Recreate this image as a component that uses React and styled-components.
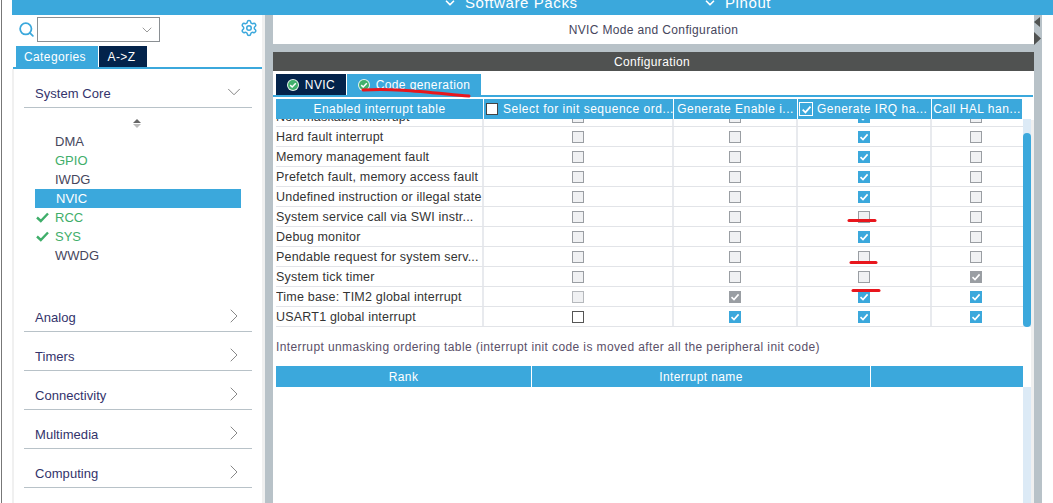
import React from "react";
import styled, { createGlobalStyle } from "styled-components";
import { Search, Settings, ChevronDown, ChevronRight } from "lucide-react";

const GlobalStyle = createGlobalStyle`
  html, body {
    margin: 0;
    padding: 0;
    background: #fff;
    overflow: hidden;
  }
  * { box-sizing: border-box; }
`;

const blue = "#3ba8dc";
const navy = "#03234b";
const slate = "#b8c2c8";
const soft = "#f0f0f0";
const ink = "#46465c";

const Page = styled.div`
  width: 1053px;
  height: 503px;
  position: relative;
  overflow: hidden;
  background: #fff;
  display: flex;
  flex-direction: column;
  padding-left: 12px;
  font-family: "Liberation Sans", Arial, sans-serif;
  color: ${ink};
`;

const EdgeLine = styled.div`
  position: absolute;
  left: 1px;
  top: 0;
  bottom: 0;
  width: 1px;
  background: #777;
`;

const TopBar = styled.div`
  height: 15px;
  flex: none;
  background: ${blue};
  color: #fff;
  overflow: hidden;
  display: flex;
  padding-left: 431px;
`;

const TopItem = styled.div`
  width: ${(p) => p.$width}px;
  display: flex;
  gap: 8px;
  align-items: center;
  height: 15px;
  margin-top: -5px;
  font-size: 15px;
  letter-spacing: 0.6px;
  white-space: nowrap;
`;

const Body = styled.div`
  flex: 1;
  display: flex;
  min-height: 0;
`;

const Sidebar = styled.div`
  width: 253px;
  flex: none;
  display: flex;
  flex-direction: column;
  border-right: 3px solid ${soft};
`;

const SearchRow = styled.div`
  height: 31px;
  flex: none;
  display: flex;
  align-items: flex-start;
  padding: 2px 4px 0 6px;
`;

const SearchGlyph = styled(Search)`
  margin: 4px 2px 0 0;
  color: ${blue};
`;

const Select = styled.div`
  width: 123px;
  height: 25px;
  border: 1px solid #8a8f93;
  display: flex;
  align-items: center;
  justify-content: flex-end;
  padding-right: 4px;
  color: #8a8a8a;
`;

const Gear = styled(Settings)`
  margin: 2px 0 0 auto;
  color: ${blue};
`;

const SideTabs = styled.div`
  height: 23px;
  flex: none;
  display: flex;
  gap: 1px;
  padding-left: 3px;
  border-bottom: 2px solid ${blue};
  margin-left: 1px;
`;

const Tab = styled.div`
  height: 21px;
  width: ${(p) => p.$width}px;
  padding-right: ${(p) => p.$trim || 0}px;
  background: ${(p) => (p.$active ? blue : navy)};
  color: #fff;
  font-size: 12px;
  letter-spacing: 0.4px;
  display: flex;
  align-items: center;
  justify-content: center;
  gap: 6px;
`;

const Panel = styled.div`
  flex: 1;
  display: flex;
  flex-direction: column;
  border-left: 2px solid ${soft};
  padding: 0 10px;
  min-height: 0;
`;

const Category = styled.div`
  height: 39px;
  flex: none;
  border-bottom: 1px solid ${slate};
  display: flex;
  align-items: flex-end;
  justify-content: space-between;
  padding: 0 6px 5px 11px;
  font-size: 13px;
  letter-spacing: 0.05px;
  color: #33336b;
  line-height: 16px;
`;

const Caret = styled.span`
  color: #7a7a7a;
  display: flex;
  width: 24px;
  height: 24px;
  align-items: center;
  justify-content: center;
  margin-bottom: -2px;
`;

const ListArea = styled.div`
  height: 185px;
  flex: none;
  display: flex;
  flex-direction: column;
  padding: 11px 0 0 11px;
`;

const SortArrows = styled.svg`
  display: block;
  align-self: center;
  margin: 0 0 4px -14px;
`;

const ListRow = styled.div`
  height: 19px;
  width: 206px;
  display: flex;
  align-items: center;
  padding-left: ${(p) => (p.$active ? 21 : 20)}px;
  position: relative;
  font-size: 13px;
  background: ${(p) => (p.$active ? blue : "transparent")};
  color: ${(p) => (p.$active ? "#fff" : p.$ok ? "#3fae6a" : ink)};
`;

const Tick = styled.svg`
  position: absolute;
  left: 1px;
  top: 4px;
`;

const Splitter = styled.div`
  width: 8px;
  flex: none;
  background: ${slate};
`;

const Main = styled.div`
  width: 761px;
  flex: none;
  display: flex;
  flex-direction: column;
`;

const TitleBar = styled.div`
  height: 29px;
  flex: none;
  display: flex;
  align-items: center;
  justify-content: center;
  font-size: 12px;
  letter-spacing: 0.35px;
`;

const GreyGap = styled.div`
  height: 8px;
  flex: none;
  background: ${slate};
`;

const ConfigBar = styled.div`
  height: 19px;
  flex: none;
  background: #505251;
  color: #fff;
  font-size: 12px;
  letter-spacing: 0.35px;
  display: flex;
  align-items: center;
  justify-content: center;
  padding-right: 3px;
`;

const ConfigTabs = styled.div`
  height: 24px;
  flex: none;
  display: flex;
  gap: 1px;
  align-items: flex-end;
  padding-left: 3px;
`;

const BlueRule = styled.div`
  height: 2px;
  width: 760px;
  flex: none;
  background: ${blue};
`;

const Content = styled.div`
  flex: 1;
  display: flex;
  min-height: 0;
`;

const TableArea = styled.div`
  width: 750px;
  flex: none;
  padding-left: 3px;
  display: flex;
  flex-direction: column;
`;

const columns = "208px 190px 124px 134px 91px";

const HeadRow = styled.div`
  height: 20px;
  margin-top: 2px;
  flex: none;
  display: grid;
  grid-template-columns: ${columns};
`;

const HeadCell = styled.div`
  background: ${blue};
  color: #fff;
  font-size: 12px;
  letter-spacing: 0.5px;
  display: flex;
  align-items: center;
  justify-content: ${(p) => (p.$start ? "flex-start" : "center")};
  gap: 5px;
  white-space: nowrap;
  overflow: hidden;
  border-right: 1px solid #fff;
  padding: 0 2px;
`;

const HeadBox = styled.span`
  width: ${(p) => (p.$light ? 14 : 12)}px;
  height: ${(p) => (p.$light ? 14 : 12)}px;
  margin: 0 ${(p) => (p.$light ? -1 : 0)}px 0 ${(p) => (p.$light ? -1 : 0)}px;
  flex: none;
  border: 1px solid ${(p) => (p.$light ? "#fff" : "#444")};
  background: ${(p) => (p.$light ? blue : "#fff")};
  display: flex;
  align-items: center;
  justify-content: center;
`;

const RowsClip = styled.div`
  height: 208px;
  flex: none;
  overflow: hidden;
`;

const Rows = styled.div`
  margin-top: -12px;
`;

const Row = styled.div`
  height: 20px;
  display: grid;
  grid-template-columns: ${columns};
  border-bottom: 1px solid #e2e4e8;
`;

const Cell = styled.div`
  display: flex;
  align-items: center;
  justify-content: center;
  border-right: 2px solid #e8eaee;
  font-size: 12.5px;
  letter-spacing: 0.2px;
  color: #333;
  white-space: nowrap;
  overflow: hidden;
  &:first-child {
    justify-content: flex-start;
  }
  &:last-child {
    border-right: 0;
    padding-right: 4px;
  }
`;

const boxTone = {
  off: ["#f0f1f3", "#9a9ea3"],
  on: [blue, blue],
  locked: ["#9a9ea3", "#9a9ea3"],
  open: ["#fff", "#555"],
  faint: ["#f0f1f3", "#b5b8bc"],
};

const Box = styled.span`
  width: 12px;
  height: 12px;
  border: 1px solid ${(p) => boxTone[p.$state][1]};
  background: ${(p) => boxTone[p.$state][0]};
  display: flex;
  align-items: center;
  justify-content: center;
`;

const Note = styled.div`
  height: 39px;
  flex: none;
  display: flex;
  align-items: center;
  font-size: 12px;
  letter-spacing: 0.39px;
  color: #5a5068;
`;

const RankHead = styled.div`
  display: grid;
  grid-template-columns: 256px 339px 152px;
  height: 21px;
  flex: none;
`;

const RankCell = styled.div`
  background: ${blue};
  color: #fff;
  font-size: 12px;
  letter-spacing: 0.4px;
  display: flex;
  align-items: center;
  justify-content: center;
  border-right: ${(p) => (p.$last ? 0 : "1px solid #fff")};
`;

const ScrollCol = styled.div`
  width: 8px;
  flex: none;
  display: flex;
  flex-direction: column;
`;

const Track = styled.div`
  height: 208px;
  margin-top: 22px;
  padding-top: 14px;
  flex: none;
  background: #dceaf6;
`;

const Thumb = styled.div`
  height: 194px;
  background: ${blue};
  border-radius: 4px;
`;

const LowerTrack = styled.div`
  flex: 1;
  margin-top: 60px;
  background: #dceaf6;
`;

const SoftEdge = styled.div`
  width: 4px;
  flex: none;
  margin-top: 23px;
  background: ${soft};
`;

const Collapse = styled.div`
  width: 8px;
  flex: none;
  background: ${slate};
  padding-top: 2px;
`;

const Marks = styled.svg`
  position: absolute;
  left: 0;
  top: 0;
  pointer-events: none;
`;

const Check = ({ color = "#fff", size = 10 }) => (
  <svg width={size} height={size} viewBox="0 0 10 10">
    <path d="M1.5 5.2 4 7.6 8.6 2.4" fill="none" stroke={color} strokeWidth="1.6" />
  </svg>
);

const Ok = () => (
  <svg width="12" height="12" viewBox="0 0 12 12">
    <circle cx="6" cy="6" r="6" fill="#e6f4ea" />
    <circle cx="6" cy="6" r="5" fill="#41b06c" />
    <path d="M3.2 6.1 5.2 8 8.8 4.2" fill="none" stroke="#fff" strokeWidth="1.5" />
  </svg>
);

const tableRows = [
  ["Non maskable interrupt", "off", "off", "on", "off"],
  ["Hard fault interrupt", "off", "off", "on", "off"],
  ["Memory management fault", "off", "off", "on", "off"],
  ["Prefetch fault, memory access fault", "off", "off", "on", "off"],
  ["Undefined instruction or illegal state", "off", "off", "on", "off"],
  ["System service call via SWI instr...", "off", "off", "off", "off"],
  ["Debug monitor", "off", "off", "on", "off"],
  ["Pendable request for system serv...", "off", "off", "off", "off"],
  ["System tick timer", "off", "off", "off", "locked"],
  ["Time base: TIM2 global interrupt", "faint", "locked", "on", "on"],
  ["USART1 global interrupt", "open", "on", "on", "on"],
];

const peripherals = [
  { name: "DMA" },
  { name: "GPIO", ok: true },
  { name: "IWDG" },
  { name: "NVIC", active: true },
  { name: "RCC", ok: true, tick: true },
  { name: "SYS", ok: true, tick: true },
  { name: "WWDG" },
];

const closedGroups = ["Analog", "Timers", "Connectivity", "Multimedia", "Computing"];

export default function App() {
  return (
    <Page>
      <GlobalStyle />
      <EdgeLine />
      <TopBar>
        <TopItem $width={260}>
          <ChevronDown size={14} strokeWidth={3} />
          Software Packs
        </TopItem>
        <TopItem $width={100}>
          <ChevronDown size={14} strokeWidth={3} />
          Pinout
        </TopItem>
      </TopBar>
      <Body>
        <Sidebar>
          <SearchRow>
            <SearchGlyph size={17} strokeWidth={2.5} />
            <Select>
              <ChevronDown size={16} strokeWidth={1.3} />
            </Select>
            <Gear size={18} />
          </SearchRow>
          <SideTabs>
            <Tab $active $width={82} $trim={4}>Categories</Tab>
            <Tab $width={48} $trim={3}>A-&gt;Z</Tab>
          </SideTabs>
          <Panel>
            <Category>
              System Core
              <Caret><ChevronDown size={22} strokeWidth={1} /></Caret>
            </Category>
            <ListArea>
              <SortArrows width="10" height="9" viewBox="0 0 10 9">
                <path d="M5 0 9 4H1Z" fill="#666" />
                <path d="M5 9 9 5H1Z" fill="#bbb" />
              </SortArrows>
              {peripherals.map((item) => (
                <ListRow key={item.name} $active={item.active} $ok={item.ok}>
                  {item.tick && (
                    <Tick width="13" height="11" viewBox="0 0 13 11">
                      <path d="M1 5.5 4.8 9 12 1.5" fill="none" stroke="#3fae6a" strokeWidth="2.4" />
                    </Tick>
                  )}
                  {item.name}
                </ListRow>
              ))}
            </ListArea>
            {closedGroups.map((name) => (
              <Category key={name}>
                {name}
                <Caret><ChevronRight size={24} strokeWidth={0.9} /></Caret>
              </Category>
            ))}
          </Panel>
        </Sidebar>
        <Splitter />
        <Main>
          <TitleBar>NVIC Mode and Configuration</TitleBar>
          <GreyGap />
          <ConfigBar>Configuration</ConfigBar>
          <ConfigTabs>
            <Tab $width={70}><Ok />NVIC</Tab>
            <Tab $active $width={134}><Ok />Code generation</Tab>
          </ConfigTabs>
          <BlueRule />
          <Content>
            <TableArea>
              <HeadRow>
                <HeadCell>Enabled interrupt table</HeadCell>
                <HeadCell $start><HeadBox />Select for init sequence ord...</HeadCell>
                <HeadCell>Generate Enable i...</HeadCell>
                <HeadCell $start><HeadBox $light><Check size={11} /></HeadBox>Generate IRQ ha...</HeadCell>
                <HeadCell>Call HAL han...</HeadCell>
              </HeadRow>
              <RowsClip>
                <Rows>
                  {tableRows.map(([label, ...boxes]) => (
                    <Row key={label}>
                      <Cell>{label}</Cell>
                      {boxes.map((state, i) => (
                        <Cell key={i}>
                          <Box $state={state}>
                            {(state === "on" || state === "locked") && <Check />}
                          </Box>
                        </Cell>
                      ))}
                    </Row>
                  ))}
                </Rows>
              </RowsClip>
              <Note>Interrupt unmasking ordering table (interrupt init code is moved after all the peripheral init code)</Note>
              <RankHead>
                <RankCell>Rank</RankCell>
                <RankCell>Interrupt name</RankCell>
                <RankCell $last />
              </RankHead>
            </TableArea>
            <ScrollCol>
              <Track><Thumb /></Track>
              <LowerTrack />
            </ScrollCol>
            <SoftEdge />
          </Content>
        </Main>
        <Collapse>
          <svg width="8" height="30" viewBox="0 0 8 30">
            <path d="M6 0V10L0 5Z" fill="#505251" />
            <path d="M0 15V28L7 21.5Z" fill="#505251" />
          </svg>
        </Collapse>
      </Body>
      <Marks width="1053" height="503" viewBox="0 0 1053 503">
        <g fill="none" stroke="#e8161d" strokeWidth="3" strokeLinecap="round">
          <path d="M363 90 C395 88 425 92 469 96" />
          <path d="M849 220.5H875" />
          <path d="M851 262.5H876" />
          <path d="M853 290.5H879" />
        </g>
      </Marks>
    </Page>
  );
}
